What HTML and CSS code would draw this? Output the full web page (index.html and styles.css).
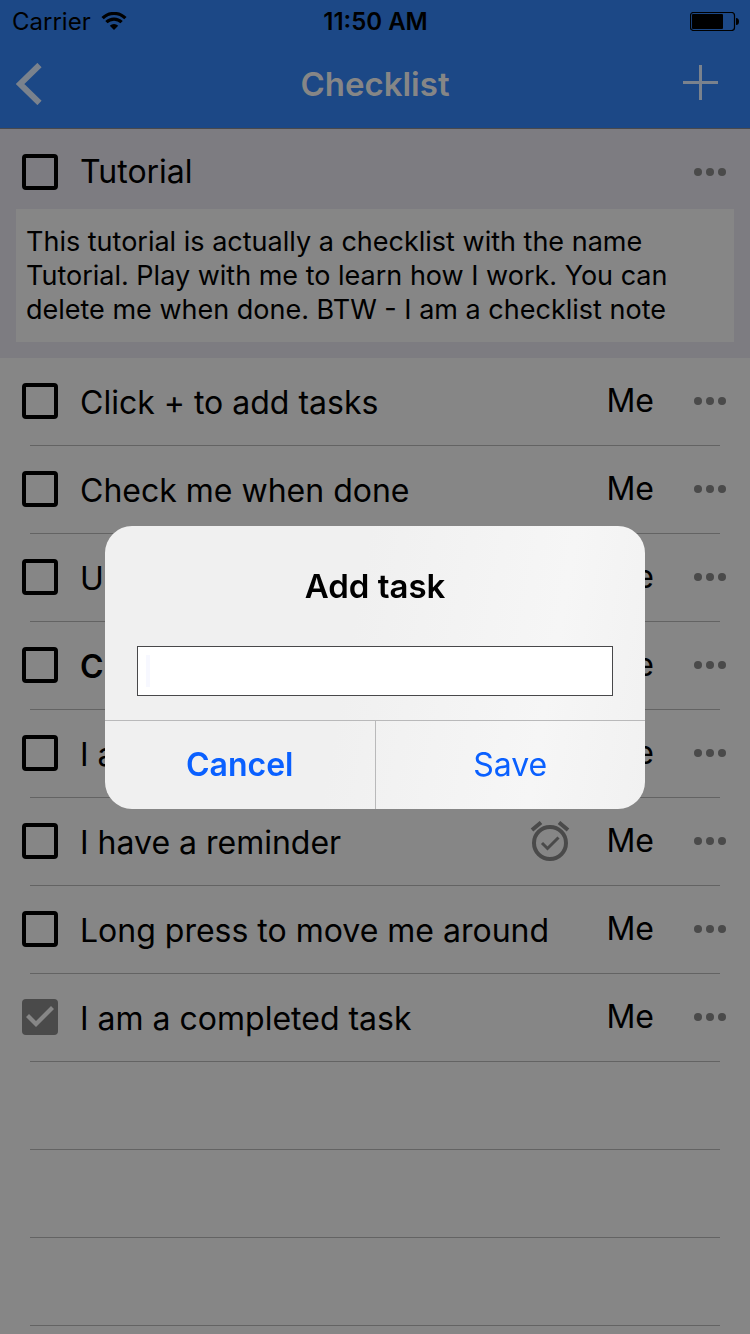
FILE: index.html
```html
<!DOCTYPE html>
<html lang="en">
<head>
<meta charset="utf-8">
<meta name="viewport" content="width=device-width, initial-scale=1">
<title>Checklist</title>
<link rel="stylesheet" href="styles.css">
</head>
<body>
<svg class="defs" width="0" height="0" aria-hidden="true">
  <symbol id="dots" viewBox="0 0 32 8"><circle cx="4" cy="4" r="4"/><circle cx="16" cy="4" r="4"/><circle cx="28" cy="4" r="4"/></symbol>
</svg>
<div class="app">
  <header class="top">
    <div class="status">
      <div class="carrier">
        <span>Carrier</span>
        <svg class="wifi" width="26" height="18" viewBox="0 0 26 18" fill="none" stroke="#000" stroke-width="3.2"><path d="M1.6 6.2a16 16 0 0 1 22.8 0"/><path d="M5.4 10.2a10.7 10.7 0 0 1 15.2 0"/><path d="M13 18l-4.2-4.2a6 6 0 0 1 8.4 0z" fill="#000" stroke="none"/></svg>
      </div>
      <span class="clock">11:50 AM</span>
      <svg class="battery" width="49" height="19" viewBox="0 0 49 19"><rect x=".5" y=".5" width="44" height="18" rx="3" fill="none" stroke="#000" stroke-width="1.2"/><rect x="2" y="2" width="31" height="15" rx="1"/><path d="M46 6q3 0 3 3.5t-3 3.5z"/></svg>
    </div>
    <nav class="nav">
      <button class="icon-btn back" aria-label="Back"><svg width="26" height="42" viewBox="0 0 26 42" fill="none" stroke="#7a828d" stroke-width="6"><path d="M23.500 2L4 21L23.500 40"/></svg></button>
      <h1>Checklist</h1>
      <button class="icon-btn add" aria-label="Add"><svg width="35" height="35" viewBox="0 0 35 35" stroke="#7a828d" stroke-width="3"><path d="M17.500 0v35M0 17.500h35"/></svg></button>
    </nav>
  </header>
  <section class="summary">
    <div class="row">
      <input class="check" type="checkbox" id="c0"><label class="name" for="c0">Tutorial</label>
      <button class="icon-btn more" aria-label="More"><svg width="32" height="8"><use href="#dots"/></svg></button>
    </div>
    <p class="note">This tutorial is actually a checklist with the name Tutorial. Play with me to learn how I work. You can delete me when done. BTW - I am a checklist note</p>
  </section>
  <ul class="tasks">
    <li><div class="row"><input class="check" type="checkbox" id="c1"><label class="name" for="c1">Click + to add tasks</label><span class="who">Me</span><button class="icon-btn more" aria-label="More"><svg width="32" height="8"><use href="#dots"/></svg></button></div></li>
    <li><div class="row"><input class="check" type="checkbox" id="c2"><label class="name" for="c2">Check me when done</label><span class="who">Me</span><button class="icon-btn more" aria-label="More"><svg width="32" height="8"><use href="#dots"/></svg></button></div></li>
    <li><div class="row"><input class="check" type="checkbox" id="c3"><label class="name" for="c3">U</label><span class="who">Me</span><button class="icon-btn more" aria-label="More"><svg width="32" height="8"><use href="#dots"/></svg></button></div></li>
    <li><div class="row"><input class="check" type="checkbox" id="c4"><label class="name strong" for="c4">C</label><span class="who">Me</span><button class="icon-btn more" aria-label="More"><svg width="32" height="8"><use href="#dots"/></svg></button></div></li>
    <li><div class="row"><input class="check" type="checkbox" id="c5"><label class="name" for="c5">I a</label><span class="who">Me</span><button class="icon-btn more" aria-label="More"><svg width="32" height="8"><use href="#dots"/></svg></button></div></li>
    <li><div class="row"><input class="check" type="checkbox" id="c6"><label class="name" for="c6">I have a reminder</label><svg class="alarm" width="40" height="40" viewBox="0 0 40 40" fill="none" stroke="#4a4a4a"><circle cx="20" cy="22" r="16" stroke-width="4"/><path d="M2 9l9-7.500M38 9l-9-7.500" stroke-width="4"/><path d="M12 22l5.500 5.500L28.500 16.500" stroke-width="3"/></svg><span class="who">Me</span><button class="icon-btn more" aria-label="More"><svg width="32" height="8"><use href="#dots"/></svg></button></div></li>
    <li><div class="row"><input class="check" type="checkbox" id="c7"><label class="name" for="c7">Long press to move me around</label><span class="who">Me</span><button class="icon-btn more" aria-label="More"><svg width="32" height="8"><use href="#dots"/></svg></button></div></li>
    <li><div class="row"><input class="check" type="checkbox" id="c8" checked><label class="name" for="c8">I am a completed task</label><span class="who">Me</span><button class="icon-btn more" aria-label="More"><svg width="32" height="8"><use href="#dots"/></svg></button></div></li>
    <li></li>
    <li></li>
    <li></li>
  </ul>
</div>
<div class="overlay">
  <form class="dialog" role="dialog" aria-labelledby="task-label">
    <label class="dialog-title" id="task-label" for="task">Add task</label>
    <input class="field" id="task" type="text">
    <div class="actions">
      <button type="button" class="cancel">Cancel</button>
      <button type="submit" class="save">Save</button>
    </div>
  </form>
</div>
</body>
</html>
```
FILE: styles.css
```css
* { box-sizing: border-box; }
body {
  margin: 0;
  font-family: Inter, "Liberation Sans", sans-serif;
  color: #000;
  background: #868686;
}
button { font: inherit; color: inherit; background: none; border: 0; padding: 0; cursor: pointer; }
svg { display: block; flex: none; }
.defs { position: absolute; }
.app { min-height: 100vh; overflow: hidden; }

.top { background: #1c4886; border-bottom: 1px solid #48494d; }
.status {
  display: grid;
  grid-template-columns: 1fr auto 1fr;
  align-items: center;
  height: 40px;
  padding: 2px 11px 0 12px;
  font-size: 24px;
}
.carrier { display: flex; align-items: center; gap: 10px; }
.clock { font-weight: 600; }
.battery { justify-self: end; }
.nav {
  display: grid;
  grid-template-columns: 1fr auto 1fr;
  align-items: center;
  height: 88px;
  padding: 0 16px;
}
.nav h1 { margin: 0; font-size: 33px; font-weight: 600; color: #868686; }
.icon-btn { display: flex; align-items: center; }
.back { justify-self: start; }
.add { justify-self: end; padding: 0 16px 4px; }

.summary { background: #7d7c81; padding: 0 16px 16px; }
.summary .row { height: 80px; padding-top: 6px; margin: 0 8px 0 6px; }
.note {
  margin: 0;
  padding: 16px 10px 15px;
  background: #868686;
  font-size: 27px;
  line-height: 34px;
}

.row { display: flex; align-items: center; }
.check {
  appearance: none;
  flex: none;
  width: 36px;
  height: 36px;
  margin: 0 22px 0 0;
  border: 4px solid #000;
  border-radius: 4px;
}
.check:checked { border: 0; background: #4a4a4a; }
.check:checked::before {
  content: "";
  display: block;
  width: 36px;
  height: 36px;
  background: #868686;
  clip-path: polygon(4px 18px, 7px 15px, 14px 22px, 29px 7px, 32px 10px, 14px 28px);
}
.name { flex: 1; font-size: 32px; line-height: 40px; white-space: nowrap; }
.tasks .name { padding-top: 4px; }
.strong { font-weight: 600; }
.alarm { margin-right: 36px; }
.who { font-size: 32px; line-height: 40px; }
.more { margin-left: 40px; fill: #4a4a4a; }

.tasks { list-style: none; margin: 0; padding: 0 30px; }
.tasks li { height: 88px; border-bottom: 1px solid #636363; }
.tasks .row { height: 86px; margin: 0 -6px 0 -8px; }

.overlay {
  position: fixed;
  inset: 0;
  display: flex;
  align-items: center;
  justify-content: center;
}
.dialog {
  display: flex;
  flex-direction: column;
  width: 72%;
  padding-top: 36px;
  border-radius: 27px;
  overflow: hidden;
  background: linear-gradient(100deg, #f0f0f0 45%, #f6f6f6 80%, #f1f1f1);
}
.dialog-title { font-size: 33px; font-weight: 600; line-height: 48px; text-align: center; }
.field {
  height: 50px;
  margin: 36px 32px 24px;
  padding: 0 12px;
  border: 1px solid #48484a;
  border-radius: 0;
  font: inherit;
  font-size: 27px;
  background: linear-gradient(#f7f8ff, #f7f8ff) 8px 8px / 4px 32px no-repeat #fff;
}
.actions { display: flex; border-top: 1px solid #b9b9ba; }
.actions button { flex: 1; height: 88px; font-size: 32px; color: #0a60ff; }
.actions .cancel { font-weight: 600; }
.actions .save { border-left: 1px solid #b9b9ba; }
```
